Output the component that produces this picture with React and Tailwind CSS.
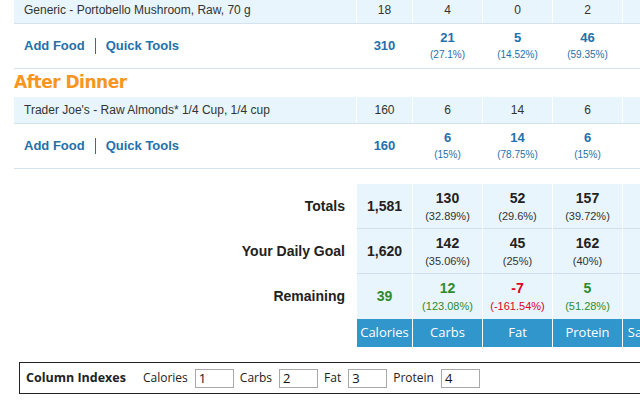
import React from 'react'

const widths = ['w-[55px]', 'w-[69px]', 'w-[69px]', 'w-[69px]', 'w-[69px]', 'w-[69px]']

const FoodRow = ({ name, values, className = '' }) => (
  <div className={`flex gap-[1px] h-[27px] border-b border-[#d3e2ec] ${className}`}>
    <div className="w-[342px] bg-[#e9f5fc] flex items-center pl-[10px] text-[12px] text-[#333]">{name}</div>
    {values.map((v, i) => (
      <div key={i} className={`${widths[i]} bg-[#e9f5fc] flex items-center justify-center text-[12px] text-[#333]`}>{v}</div>
    ))}
  </div>
)

const MealFooter = ({ calories, macros }) => (
  <div className="flex gap-[1px] h-[45px] border-b border-[#d3e2ec]">
    <div className="w-[342px] flex items-center pl-[10px] text-[13px] font-bold text-[#2470aa]">
      <span>Add Food</span>
      <span className="mx-[10px] w-[1px] h-[16px] bg-[#2470aa]" />
      <span>Quick Tools</span>
    </div>
    <div className="w-[55px] flex items-center justify-center text-[13px] font-bold text-[#2470aa]">{calories}</div>
    {macros.map((m, i) => (
      <div key={i} className="w-[69px] flex flex-col items-center justify-center text-[#2470aa]">
        <span className="text-[13px] font-bold leading-[16px]">{m.value}</span>
        <span className="text-[10px] leading-[14px] mt-[2px]">{m.pct}</span>
      </div>
    ))}
  </div>
)

const TotalsRow = ({ label, calories, macros, color = 'text-[#222]', pctColor = 'text-[#333]', border = true }) => (
  <div className="flex gap-[1px] h-[45px]">
    <div className="w-[342px] flex items-center justify-end pr-[11px] text-[14px] font-bold text-[#222]">{label}</div>
    <div className={`w-[55px] bg-[#e8f5fd] flex items-center justify-center text-[14px] font-bold ${color} ${border ? 'border-b border-[#cfe0ec]' : ''}`}>{calories}</div>
    {macros.map((m, i) => (
      <div key={i} className={`w-[69px] bg-[#e8f5fd] flex flex-col items-center justify-center ${border ? 'border-b border-[#cfe0ec]' : ''}`}>
        <span className={`text-[14px] font-bold leading-[17px] ${m.color ?? color}`}>{m.value}</span>
        <span className={`text-[11px] leading-[14px] mt-[2px] ${m.pctColor ?? pctColor}`}>{m.pct}</span>
      </div>
    ))}
    <div className={`w-[69px] bg-[#e8f5fd] ${border ? 'border-b border-[#cfe0ec]' : ''}`} />
  </div>
)

const IndexField = ({ label, value }) => (
  <div className="flex items-center">
    <span className="text-[12px] text-[#222]">{label}</span>
    <div className="ml-[7px] w-[39px] h-[19px] border border-[#a9a9a9] flex items-center pl-[3px] pt-[2px] text-[13px] text-[#111]">{value}</div>
  </div>
)

export default function App() {
  const green = 'text-[#2e8b2e]'
  const red = 'text-[#e0001b]'
  return (
    <div className="w-[640px] h-[400px] overflow-hidden bg-white font-['Liberation_Sans',Arial,sans-serif]">
      <div className="w-[900px] pl-[14px] -mt-[3px]">
        {/* Previous meal tail */}
        <FoodRow name="Generic - Portobello Mushroom, Raw, 70 g" values={['18', '4', '0', '2', '', '']} />
        <MealFooter
          calories="310"
          macros={[
            { value: '21', pct: '(27.1%)' },
            { value: '5', pct: '(14.52%)' },
            { value: '46', pct: '(59.35%)' },
          ]}
        />

        {/* After Dinner */}
        <div className="h-[28px] flex items-center text-[17px] font-bold text-[#f7961f] font-['DejaVu_Sans',sans-serif] tracking-[-0.5px]">After Dinner</div>
        <FoodRow name="Trader Joe's - Raw Almonds* 1/4 Cup, 1/4 cup" values={['160', '6', '14', '6', '', '']} />
        <MealFooter
          calories="160"
          macros={[
            { value: '6', pct: '(15%)' },
            { value: '14', pct: '(78.75%)' },
            { value: '6', pct: '(15%)' },
          ]}
        />

        {/* Totals */}
        <div className="mt-[15px]">
          <TotalsRow
            label="Totals"
            calories="1,581"
            macros={[
              { value: '130', pct: '(32.89%)' },
              { value: '52', pct: '(29.6%)' },
              { value: '157', pct: '(39.72%)' },
            ]}
          />
          <TotalsRow
            label="Your Daily Goal"
            calories="1,620"
            macros={[
              { value: '142', pct: '(35.06%)' },
              { value: '45', pct: '(25%)' },
              { value: '162', pct: '(40%)' },
            ]}
          />
          <TotalsRow
            label="Remaining"
            calories="39"
            color={green}
            pctColor={green}
            border={false}
            macros={[
              { value: '12', pct: '(123.08%)' },
              { value: '-7', pct: '(-161.54%)', color: red, pctColor: red },
              { value: '5', pct: '(51.28%)' },
            ]}
          />
          <div className="flex gap-[1px] h-[28px]">
            <div className="w-[342px]" />
            {['Calories', 'Carbs', 'Fat', 'Protein', 'Saturated'].map((h, i) => (
              <div key={h} className={`${widths[i]} bg-[#3196cb] flex items-center justify-center text-[13px] text-white font-['Open_Sans',sans-serif]`}>{h}</div>
            ))}
          </div>
        </div>
      </div>

      {/* Column Indexes */}
      <div className="ml-[19px] mt-[15px] w-[660px] h-[32px] border border-[#222] flex items-center gap-[6px] pl-[6px] font-['Open_Sans',sans-serif]">
        <span className="text-[12.5px] font-bold text-[#222] mr-[11px]">Column Indexes</span>
        <IndexField label="Calories" value="1" />
        <IndexField label="Carbs" value="2" />
        <IndexField label="Fat" value="3" />
        <IndexField label="Protein" value="4" />
      </div>
    </div>
  )
}
